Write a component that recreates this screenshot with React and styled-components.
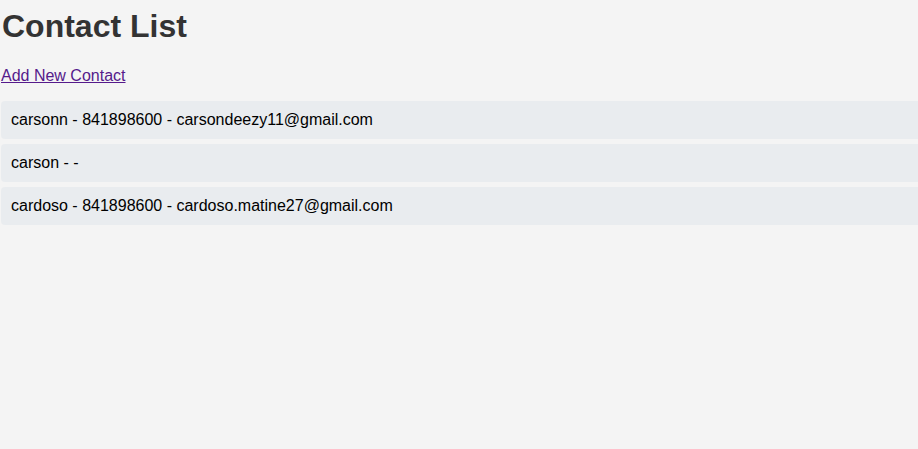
import React from "react";
import styled, { createGlobalStyle } from "styled-components";

const contacts = [
  { name: "carsonn", phone: "841898600", email: "carsondeezy11@gmail.com" },
  { name: "carson", phone: "", email: "" },
  { name: "cardoso", phone: "841898600", email: "cardoso.matine27@gmail.com" },
];

const GlobalStyle = createGlobalStyle`
  html, body {
    margin: 0;
    padding: 0;
    background: #f4f4f4;
    font-family: "Liberation Sans", Arial, sans-serif;
    overflow-x: hidden;
  }
`;

const Page = styled.div`
  display: flex;
  flex-direction: column;
  padding-left: 1px;
`;

const Title = styled.h1`
  margin: 8px 0 22px 1px;
  font-size: 32px;
  font-weight: bold;
  color: #333;
`;

const AddLink = styled.a`
  font-size: 16px;
  color: #551a8b;
  text-decoration: underline;
  cursor: pointer;
`;

const List = styled.ul`
  list-style: none;
  margin: 16px -6px 0 0;
  padding: 0;
  display: flex;
  flex-direction: column;
  gap: 5px;
`;

const Item = styled.li`
  background: #e9ecef;
  border-radius: 4px;
  padding: 10px;
  font-size: 16px;
  color: #000;
`;

const App = () => {
  return (
    <>
      <GlobalStyle />
      <Page>
        <Title>Contact List</Title>
        <div>
          <AddLink href="#add">Add New Contact</AddLink>
        </div>
        <List>
          {contacts.map((c) => (
            <Item key={c.name}>
              {c.name} - {c.phone} - {c.email}
            </Item>
          ))}
        </List>
      </Page>
    </>
  );
};

export default App;
